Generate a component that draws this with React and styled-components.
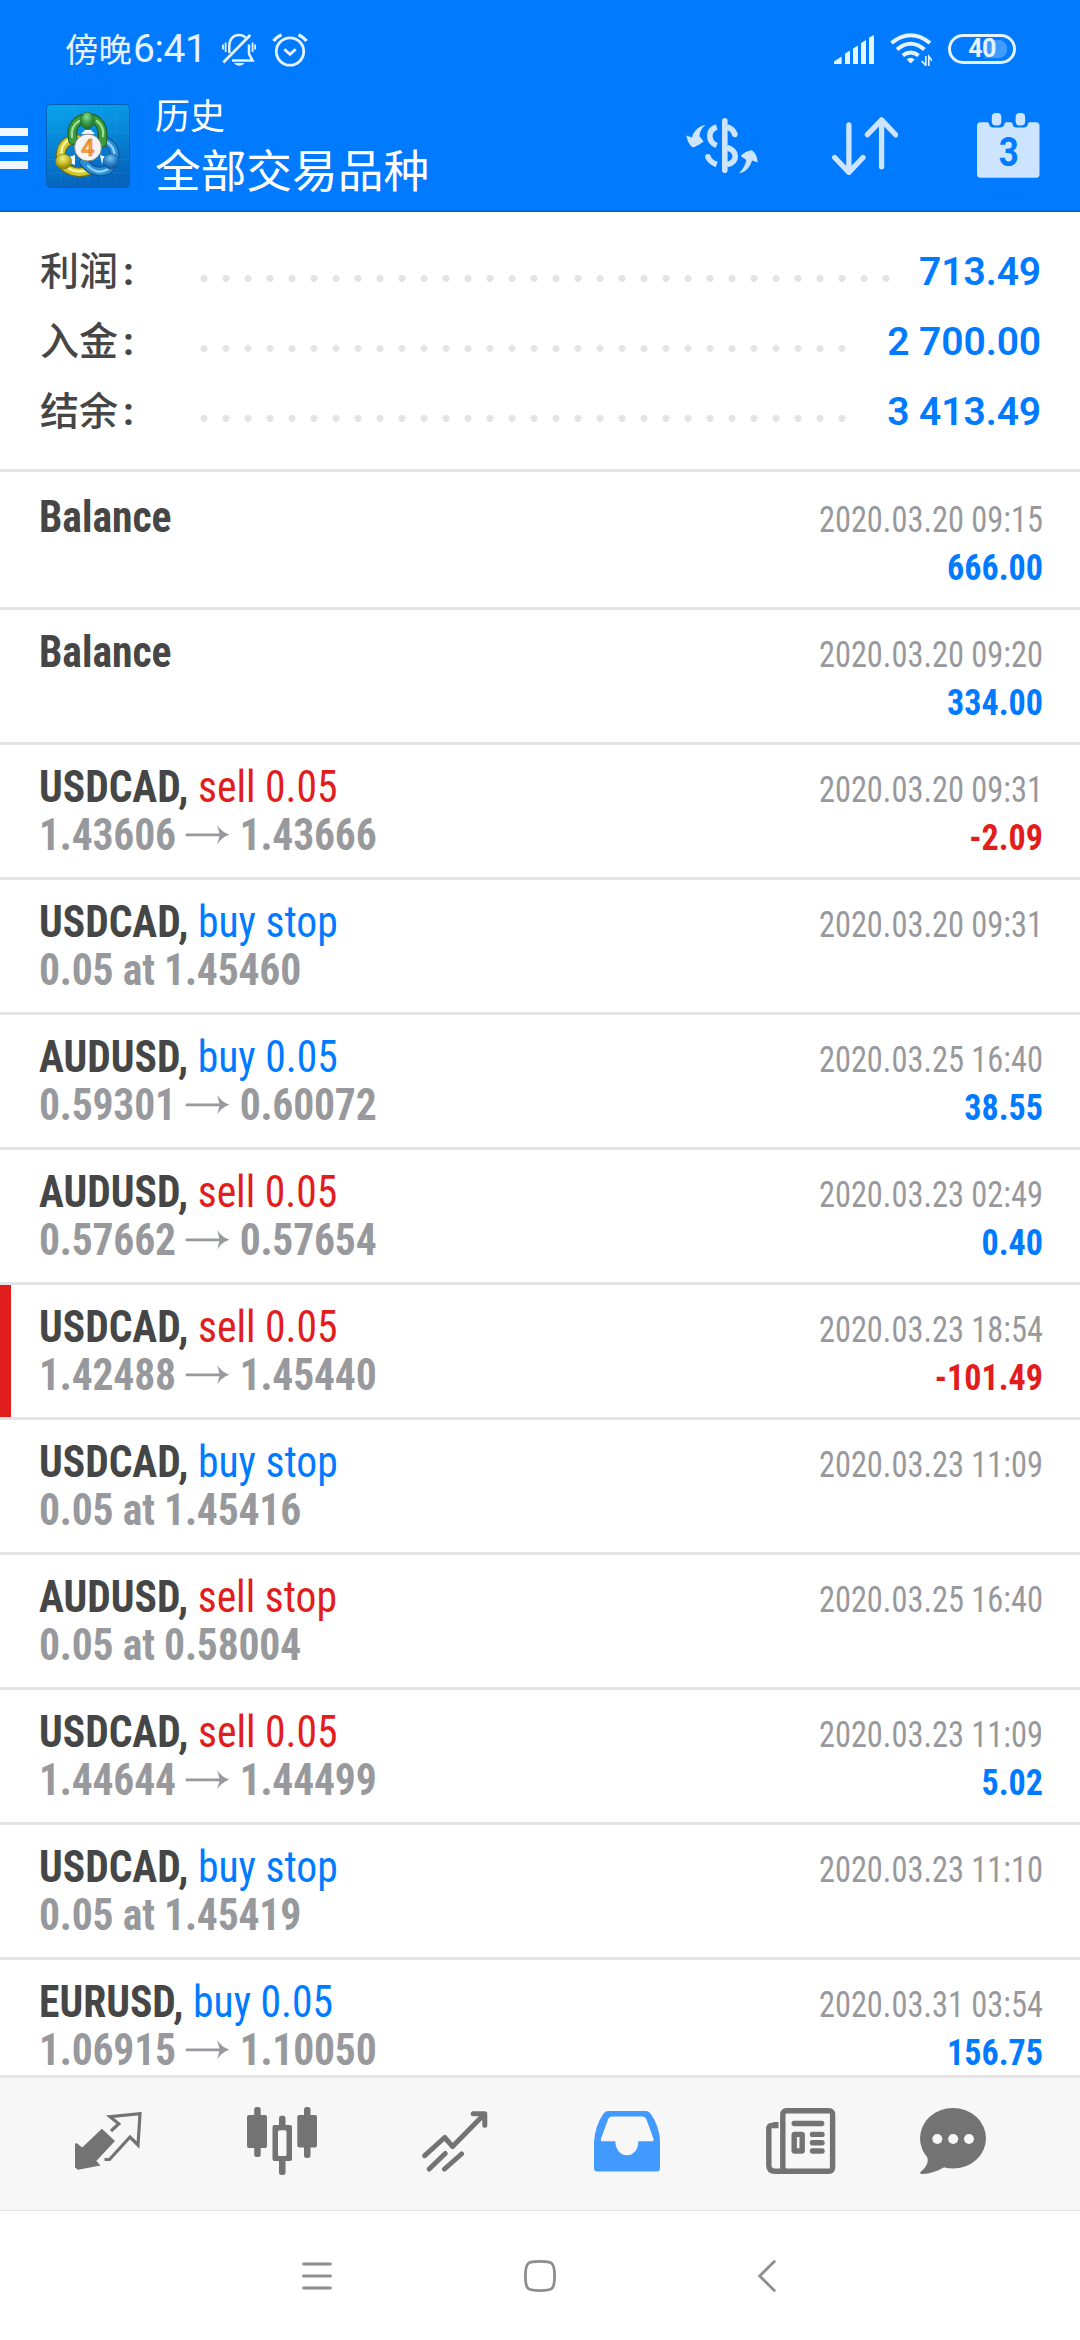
import React from "react";
import styled, { createGlobalStyle } from "styled-components";

const colors = {
  blue: "#007aff",
  red: "#e21d1d",
  dark: "#464646",
  gray: "#98999d",
  line: "#e4e4e4",
  icon: "#737373",
  headerIcon: "#cce4ff",
  status: "#e5f2ff",
};

const GlobalStyle = createGlobalStyle`
  * {
    box-sizing: border-box;
  }
  body {
    margin: 0;
    background: #fff;
    font-family: Roboto, "Noto Sans CJK SC", sans-serif;
  }
  svg {
    display: block;
    flex: none;
  }
`;

const Screen = styled.div`
  display: flex;
  flex-direction: column;
  width: 1080px;
  height: 2340px;
  overflow: hidden;
`;

const Header = styled.header`
  height: 212px;
  background: ${colors.blue};
  border-bottom: 2px solid #006be0;
`;

/* ---- status bar ---- */

const StatusBar = styled.div`
  display: flex;
  align-items: center;
  height: 80px;
  padding: 20px 64px 0 65px;
  color: ${colors.status};
`;

const Clock = styled.div`
  display: flex;
  align-items: baseline;
  width: 157px;
  font-size: 33.5px;
  line-height: 60px;
  white-space: nowrap;
`;

const Time = styled.span`
  font-size: 39px;
  letter-spacing: -0.4px;
  margin-left: 1px;
`;

const StatusIcons = styled.div`
  display: flex;
  align-items: center;
  gap: 16px;
  margin-left: ${(p) => (p.$right ? "auto" : 0)};
  padding-bottom: ${(p) => (p.$right ? 2 : 0)}px;
`;

const Battery = styled.div`
  display: flex;
  align-items: center;
  justify-content: center;
  width: 68px;
  height: 30px;
  border: 3px solid ${colors.status};
  border-radius: 15px;
  font-size: 25px;
  font-weight: 700;
  line-height: 24px;
  letter-spacing: -0.5px;
  background: linear-gradient(#409bff, #409bff) no-repeat 34px 50% / 14px 18px,
    radial-gradient(circle at 0 50%, #409bff 9px, transparent 9.5px) no-repeat 47px 50% / 10px 18px;
`;

/* ---- app bar ---- */

const AppBar = styled.div`
  display: flex;
  align-items: center;
  height: 131px;
  padding-right: 40px;
`;

const Burger = styled.div`
  display: flex;
  flex-direction: column;
  gap: 9px;
  width: 28px;
  margin: 6px 18px 0 0;

  span {
    height: 7.5px;
    background: #f0f7ff;
  }
`;

const Titles = styled.div`
  flex: 1;
  margin: 0 0 3px 25px;
  color: #fff;
`;

const Title = styled.div`
  font-size: 35px;
  line-height: 53px;
`;

const Subtitle = styled.div`
  padding-top: 4px;
  font-size: 45.7px;
  line-height: 50px;
`;

const Actions = styled.div`
  display: flex;
  align-items: center;
  color: ${colors.headerIcon};

  svg:nth-child(2) {
    margin: 0 79px 0 74px;
  }
`;

/* ---- summary ---- */

const Summary = styled.section`
  padding: 25px 39px 22px 40px;
  border-bottom: 3px solid ${colors.line};
`;

const SummaryRow = styled.div`
  display: flex;
  height: 70px;
  font-size: 39px;
  font-weight: 500;
  line-height: 70px;
`;

const Label = styled.div`
  width: 152.5px;
  color: ${colors.dark};

  span {
    margin-left: 5px;
    font-weight: 700;
  }
`;

const Dots = styled.div`
  flex: 1;
  height: 7px;
  margin: 38px 29px 0 0;
  background: radial-gradient(circle, ${colors.line} 3.2px, transparent 3.9px) 0 0 / 22px 7px repeat-x;
`;

const Total = styled.div`
  color: ${colors.blue};
  font-weight: 600;
  letter-spacing: -0.1px;
`;

/* ---- deals ---- */

const List = styled.main`
  flex: 1;
  min-height: 0;
  padding-top: 3px;
  overflow: hidden;
  font-family: "Roboto Condensed", Roboto, sans-serif;
`;

const Deal = styled.div`
  display: flex;
  justify-content: space-between;
  height: 135px;
  padding: 18px 37px 0 39px;
  border-bottom: 3px solid ${colors.line};
  box-shadow: inset ${(p) => (p.$marked ? 11 : 0)}px 0 ${colors.red};
`;

const Left = styled.div`
  font-size: 44px;
  font-weight: 700;
  line-height: 48px;
  white-space: nowrap;
  transform: scaleX(0.945);
  transform-origin: left;
`;

const Symbol = styled.div`
  color: ${colors.dark};
`;

const Kind = styled.span`
  color: ${(p) => (p.$sell ? colors.red : colors.blue)};
  font-weight: 400;
`;

const Price = styled.div`
  display: flex;
  align-items: center;
  gap: 10.5px;
  color: ${colors.gray};
  letter-spacing: -0.2px;
`;

const Right = styled.div`
  padding-top: 3px;
  font-size: 36px;
  line-height: 48px;
  text-align: right;
  white-space: nowrap;
`;

const When = styled.div`
  color: ${colors.gray};
  transform: scaleX(0.9);
  transform-origin: right;
`;

const Profit = styled.div`
  color: ${(p) => (p.$loss ? colors.red : colors.blue)};
  font-weight: 700;
  transform: scaleX(0.945);
  transform-origin: right;
`;

/* ---- bottom bars ---- */

const Tabs = styled.nav`
  display: grid;
  grid-template-columns: repeat(5, 173px) 132px;
  align-items: center;
  justify-items: center;
  height: 136px;
  padding: 0 0 6px 22px;
  background: #f7f7f7;
  border-top: 3px solid ${colors.line};
  border-bottom: 1px solid ${colors.line};
  color: ${colors.icon};
`;

const SystemNav = styled.div`
  display: grid;
  grid-template-columns: 223px 223px 231px;
  align-items: center;
  justify-items: center;
  height: 129px;
  padding-left: 205px;
  color: #8e8e8e;
`;

const deals = [
  { symbol: "Balance", when: "2020.03.20 09:15", profit: "666.00" },
  { symbol: "Balance", when: "2020.03.20 09:20", profit: "334.00" },
  { symbol: "USDCAD", kind: "sell 0.05", from: "1.43606", to: "1.43666", when: "2020.03.20 09:31", profit: "-2.09" },
  { symbol: "USDCAD", kind: "buy stop", note: "0.05 at 1.45460", when: "2020.03.20 09:31" },
  { symbol: "AUDUSD", kind: "buy 0.05", from: "0.59301", to: "0.60072", when: "2020.03.25 16:40", profit: "38.55" },
  { symbol: "AUDUSD", kind: "sell 0.05", from: "0.57662", to: "0.57654", when: "2020.03.23 02:49", profit: "0.40" },
  { symbol: "USDCAD", kind: "sell 0.05", from: "1.42488", to: "1.45440", when: "2020.03.23 18:54", profit: "-101.49", marked: true },
  { symbol: "USDCAD", kind: "buy stop", note: "0.05 at 1.45416", when: "2020.03.23 11:09" },
  { symbol: "AUDUSD", kind: "sell stop", note: "0.05 at 0.58004", when: "2020.03.25 16:40" },
  { symbol: "USDCAD", kind: "sell 0.05", from: "1.44644", to: "1.44499", when: "2020.03.23 11:09", profit: "5.02" },
  { symbol: "USDCAD", kind: "buy stop", note: "0.05 at 1.45419", when: "2020.03.23 11:10" },
  { symbol: "EURUSD", kind: "buy 0.05", from: "1.06915", to: "1.10050", when: "2020.03.31 03:54", profit: "156.75" },
];

const totals = [
  { label: "利润", value: "713.49" },
  { label: "入金", value: "2 700.00" },
  { label: "结余", value: "3 413.49" },
];

const MutedBell = () => (
  <svg width="34" height="34" fill="none" stroke="currentColor" strokeWidth="2.5">
    <path d="M1.3 29.5 28.3 2" strokeWidth="2.8" />
    <path d="M7.3 20V13C7.3 6 11.5 2 17 2c3 0 5 .9 6.7 2.6M27 11.5v9.5L30.6 27.6H10" />
    <path d="M12 30h10.5c-2.500 3.600-8 3.600-10.500 0z" fill="currentColor" stroke="none" />
    <path d="M1 11.5v5M3.6 9.5v9.5M30.6 9.5v9.5M33.2 11.5v5" strokeWidth="1.8" />
  </svg>
);

const Alarm = () => (
  <svg width="36" height="34" fill="none" stroke="currentColor" strokeWidth="2.8">
    <circle cx="18" cy="18.5" r="13.7" />
    <path d="M12.3 16.3l5.7 5 5.7-5" />
    <path d="M1.5 8Q4.500 4 9.500 1.700M26.500 1.700Q31.500 4 34.500 8" strokeWidth="3.4" />
  </svg>
);

const Signal = () => (
  <svg width="40" height="29" fill="currentColor">
    <path d="M0 29v-2.5L7.6 21.5V29zM11 29V18.5l5-3V29zM19 29V13.5l5-3V29zM27 29V8l5-3V29zM35 29V2.5L40 0V29z" />
  </svg>
);

const Wifi = () => (
  <svg width="42" height="33" fill="none" stroke="currentColor" strokeWidth="4">
    <path d="M1.5 10Q20.7-5.5 40 10M7 16.5q13.7-11.5 27.4 0M12.8 22.5q7.9-6 15.8 0" />
    <path d="M16.7 26.5q4-3.5 8 0l-4 4z" fill="currentColor" stroke="none" />
    <path d="M35.8 23v9.500l-4-4.500M38.800 33V23.500l3.500 4.500" strokeWidth="1.7" />
  </svg>
);

const Logo = () => (
  <svg width="84" height="84" viewBox="0 0 84 84">
    <defs>
      <linearGradient id="sky" x1="0" y1="0" x2="0.2" y2="1">
        <stop offset="0" stopColor="#08a5ee" />
        <stop offset="1" stopColor="#0564bd" />
      </linearGradient>
      <radialGradient id="green" cx="0.45" cy="0.3" r="0.7">
        <stop offset="0" stopColor="#8fdc9a" />
        <stop offset="0.5" stopColor="#3fa04c" />
        <stop offset="1" stopColor="#1c6b27" />
      </radialGradient>
      <radialGradient id="yellow" cx="0.45" cy="0.3" r="0.7">
        <stop offset="0" stopColor="#f3f08a" />
        <stop offset="0.5" stopColor="#c8c02a" />
        <stop offset="1" stopColor="#857a08" />
      </radialGradient>
      <radialGradient id="azure" cx="0.45" cy="0.3" r="0.7">
        <stop offset="0" stopColor="#7cc4f2" />
        <stop offset="0.5" stopColor="#2d86cc" />
        <stop offset="1" stopColor="#0d4f92" />
      </radialGradient>
    </defs>
    <rect x="0.5" y="0.5" width="83" height="83" rx="4" fill="url(#sky)" stroke="#0660b5" />
    <path d="M15 1v82M28.5 1v82M42 1v82M55.5 1v82M69 1v82M1 15h82M1 28.5h82M1 42h82M1 55.5h82M1 69h82" stroke="#fff" strokeOpacity="0.06" />
    <g fill="none" strokeLinecap="round">
      <path d="M34 35.5C20 34 13 43 15 56c3 11 17 15 29 10" stroke="#766d0c" strokeWidth="9.5" />
      <path d="M34 35.5C20 34 13 43 15 56c3 11 17 15 29 10" stroke="#cfc92b" strokeWidth="7.5" />
      <path d="M31 34C20 34 15 42 15.5 50M22 64c6 4 12 4 18 2.5" stroke="#f5f29a" strokeWidth="2.5" />
      <path d="M58 37c10 3 13 13 9 22-5 12-21 11-29-1" stroke="#0b4f91" strokeWidth="9.5" />
      <path d="M58 37c10 3 13 13 9 22-5 12-21 11-29-1" stroke="#2b8fd6" strokeWidth="7.5" />
      <path d="M61 38c6 4 8 10 7 15M42 62c7 7 14 7 20 3" stroke="#8fd2f7" strokeWidth="2.3" />
      <path d="M27 36C24 24 30 14 42 14c11 0 17 10 14 25" stroke="#165b1f" strokeWidth="9.5" />
      <path d="M27 36C24 24 30 14 42 14c11 0 17 10 14 25" stroke="#3d9a3f" strokeWidth="7.5" />
      <path d="M26 33c-1-7 2-13 7-16M51 17c5 4 7 9 6 15" stroke="#9be08f" strokeWidth="2.3" />
    </g>
    <path d="M35 30l4-4h6l4 4zM23 53l6-2v10l-6-2zM54 51l6 2-4 7z" fill="#f2f8fb" />
    <ellipse cx="41.3" cy="16.5" rx="6.8" ry="8.5" fill="url(#green)" stroke="#236f2c" strokeWidth="0.7" />
    <ellipse cx="17.5" cy="57.5" rx="8" ry="7.5" fill="url(#yellow)" stroke="#81780f" strokeWidth="0.7" />
    <ellipse cx="65" cy="57.5" rx="8" ry="7.5" fill="url(#azure)" stroke="#1560a4" strokeWidth="0.7" />
    <circle cx="42" cy="43.5" r="13.5" fill="#f4f4f5" stroke="#7d7362" strokeWidth="0.8" />
    <text x="41.7" y="52" textAnchor="middle" fontFamily="Roboto" fontSize="24" fontWeight="500" fill="#f9a13a" stroke="#e2761b" strokeWidth="0.6">4</text>
  </svg>
);

const Currency = () => (
  <svg width="72" height="56" fill="none" stroke="currentColor" strokeWidth="5.6">
    <path d="M38.8 2.8v49.5" strokeLinecap="round" />
    <path d="M30.7 9C21.5 12 21.5 24 30.7 27.5M30.7 46.5Q23.5 44 21.8 38.5M41 9q6 1.5 8 8M41 29.5C52 33 52 44 41 46.5" />
    <circle cx="21.9" cy="38.6" r="2.7" fill="currentColor" stroke="none" />
    <circle cx="48.9" cy="16.5" r="2.7" fill="currentColor" stroke="none" />
    <path
      d="M19.6 6.700C15 7.500 8 11 6 19.500L.3 17.500C1.500 24 4 27 6.500 29.300 9 29.500 14 26 17.700 23.500L13.400 18C14 13 16 9.500 19.600 6.700zM53 55.500C59 54 64 50 66 42.500L71.800 44.500C71 38 69.500 35 65.800 32.300 61 33 57 35 54.700 38L60.300 42C59 48 57 51 53 55.500z"
      fill="currentColor"
      stroke="none"
    />
  </svg>
);

const SortArrows = () => (
  <svg width="66" height="58" fill="none" stroke="currentColor" strokeWidth="5.3" strokeLinecap="round" strokeLinejoin="round">
    <path d="M16.9 8v46M2.7 40.5l14.2 14.8L31 40.5M49.6 49.8V4M35.4 17.7L49.6 2.9l14 14.8" />
  </svg>
);

const Calendar = () => (
  <svg width="63" height="65" fill="currentColor">
    <path d="M3.5 9.3h7q1.500 0 1.500 2 1 3.200 4 3.200h7q3.500 0 4.500-3.200 0-2 1.500-2h5q1.500 0 1.500 2 1 3.200 4 3.200h7q3.500 0 4.500-3.200 0-2 1.500-2h6.500q3.500 0 3.500 3.500v48.500q0 3.500-3.500 3.500H3.500Q0 64.800 0 61.300V12.800q0-3.500 3.500-3.500z" />
    <rect x="14.8" y="0" width="9.5" height="12.5" rx="4" />
    <rect x="38.6" y="0" width="9.5" height="12.5" rx="4" />
    <text x="31.7" y="53" textAnchor="middle" fontFamily="Roboto" fontSize="40" fontWeight="700" fill={colors.blue} textLength="20" lengthAdjust="spacingAndGlyphs">3</text>
  </svg>
);

const PriceArrow = () => (
  <svg width="46.5" height="20" viewBox="0 0 44 20" preserveAspectRatio="none" fill="currentColor">
    <path d="M0 8.5h34L31.7 0Q36 7 44 9.8 36 12.5 31.7 19.5L34 11.2H0z" />
  </svg>
);

const QuotesIcon = () => (
  <svg width="67" height="58">
    <path d="M1.5 31l5.700 4.500L26.900 16.700 40 29 21.300 49l4.200 4.500L3 57.700 0 55.500V32z" fill="currentColor" />
    <path d="M36 19l7.800-7.200L35 4.700 65 1.700 63 33l-8-8-20.500 22.500h-5" fill="none" stroke="currentColor" strokeWidth="3.2" />
  </svg>
);

const ChartIcon = () => (
  <svg width="70" height="68" fill="currentColor">
    <rect x="7.2" y="0" width="6.5" height="50" rx="2.5" />
    <rect x="0" y="8" width="20" height="33" rx="2" />
    <rect x="57" y="0" width="6.5" height="51" rx="2.5" />
    <rect x="50.3" y="8" width="19.7" height="32.5" rx="2" />
    <rect x="32" y="8.7" width="6.5" height="14" rx="2.5" />
    <rect x="32" y="50" width="6.5" height="18" rx="2.5" />
    <path fillRule="evenodd" d="M27.5 18h15.5q2 0 2 2v32q0 2-2 2H27.500q-2 0-2-2V20q0-2 2-2zM32.500 23.300q-1.500 0-1.500 1.500v22.700q0 1.500 1.500 1.500h5.500q1.500 0 1.500-1.500V24.800q0-1.500-1.500-1.500z" />
  </svg>
);

const TradeIcon = () => (
  <svg width="66" height="61" fill="none" stroke="currentColor" strokeWidth="5" strokeLinecap="round">
    <path d="M2.7 44.7L22.7 26.5l7.9 9L61.5 4M51.2 2.8h11.6v11.5" strokeLinejoin="round" />
    <path d="M23.2 42.5L7.2 58M39.5 43L22.5 58" />
  </svg>
);

const HistoryIcon = () => (
  <svg width="67" height="61" fill="#429aff">
    <path
      fillRule="evenodd"
      d="M14 0h38.500q2.500 0 4 2.500Q66 16 66 31v26q0 3.500-3.500 3.500h-59Q0 60.500 0 57V31Q1 15 9.500 2.500 11 0 14 0zM18 5.500q-2.800 0-4 3L6.900 28q-.5 2.300 2 2.300h12.500C21.400 38 26 44.300 33 44.300s11.400-6.300 11.400-14h13q2.700 0 2.200-2.300L52.500 8.500q-1.300-3-4-3z"
    />
  </svg>
);

const NewsIcon = () => (
  <svg width="70" height="66" fill="none" stroke="currentColor" strokeWidth="5.4">
    <rect x="16.8" y="2.7" width="49.8" height="60.6" rx="3.5" />
    <path d="M9.8 14v3.500H5.500q-2.700 0-2.700 4V57q0 6.300 6.300 6.300H20" />
    <rect x="28.2" y="26.4" width="8" height="16.6" rx="0.5" />
    <path d="M28.2 15.500h27.500M46.500 26.400h9.500M46.500 34.700h9.500M46.500 43h9.500" strokeLinecap="round" />
  </svg>
);

const ChatIcon = () => (
  <svg width="66" height="66" fill="currentColor">
    <ellipse cx="33" cy="30.3" rx="33" ry="30.3" />
    <path d="M7 49q3 7-6.500 15-1 2 1.500 2Q14 65.500 24.500 59z" />
    <g fill="#f7f7f7">
      <circle cx="17.3" cy="31" r="5" />
      <circle cx="33.2" cy="31" r="5" />
      <circle cx="49" cy="31" r="5" />
    </g>
  </svg>
);

const DealRow = ({ symbol, kind, from, to, note, when, profit, marked }) => {
  return (
    <Deal $marked={marked}>
      <Left>
        <Symbol>
          {symbol}
          {kind && ", "}
          {kind && <Kind $sell={kind.startsWith("sell")}>{kind}</Kind>}
        </Symbol>
        <Price>
          {note}
          {from && (
            <>
              {from}
              <PriceArrow />
              {to}
            </>
          )}
        </Price>
      </Left>
      <Right>
        <When>{when}</When>
        <Profit $loss={profit && profit.startsWith("-")}>{profit}</Profit>
      </Right>
    </Deal>
  );
};

const App = () => {
  return (
    <Screen>
      <GlobalStyle />
      <Header>
        <StatusBar>
          <Clock>
            傍晚<Time>6:41</Time>
          </Clock>
          <StatusIcons>
            <MutedBell />
            <Alarm />
          </StatusIcons>
          <StatusIcons $right>
            <Signal />
            <Wifi />
            <Battery>40</Battery>
          </StatusIcons>
        </StatusBar>
        <AppBar>
          <Burger>
            <span />
            <span />
            <span />
          </Burger>
          <Logo />
          <Titles>
            <Title>历史</Title>
            <Subtitle>全部交易品种</Subtitle>
          </Titles>
          <Actions>
            <Currency />
            <SortArrows />
            <Calendar />
          </Actions>
        </AppBar>
      </Header>

      <Summary>
        {totals.map(({ label, value }) => (
          <SummaryRow key={label}>
            <Label>
              {label}
              <span>:</span>
            </Label>
            <Dots />
            <Total>{value}</Total>
          </SummaryRow>
        ))}
      </Summary>

      <List>
        {deals.map((deal, i) => (
          <DealRow key={i} {...deal} />
        ))}
      </List>

      <Tabs>
        <QuotesIcon />
        <ChartIcon />
        <TradeIcon />
        <HistoryIcon />
        <NewsIcon />
        <ChatIcon />
      </Tabs>

      <SystemNav>
        <svg width="30" height="28" stroke="currentColor" strokeWidth="2.8" strokeLinecap="round">
          <path d="M1.5 2h27M1.5 14h27M1.5 26h27" />
        </svg>
        <svg width="32" height="32" fill="none" stroke="currentColor" strokeWidth="2.8">
          <path d="M16 1.400c12 0 14.600.6 14.600 14.600S28 30.600 16 30.600 1.400 30 1.400 16 4 1.400 16 1.400z" />
        </svg>
        <svg width="18" height="32" fill="none" stroke="currentColor" strokeWidth="2.8" strokeLinecap="round">
          <path d="M16.3 1.5L1.8 16l14.5 14.5" />
        </svg>
      </SystemNav>
    </Screen>
  );
};

export default App;
